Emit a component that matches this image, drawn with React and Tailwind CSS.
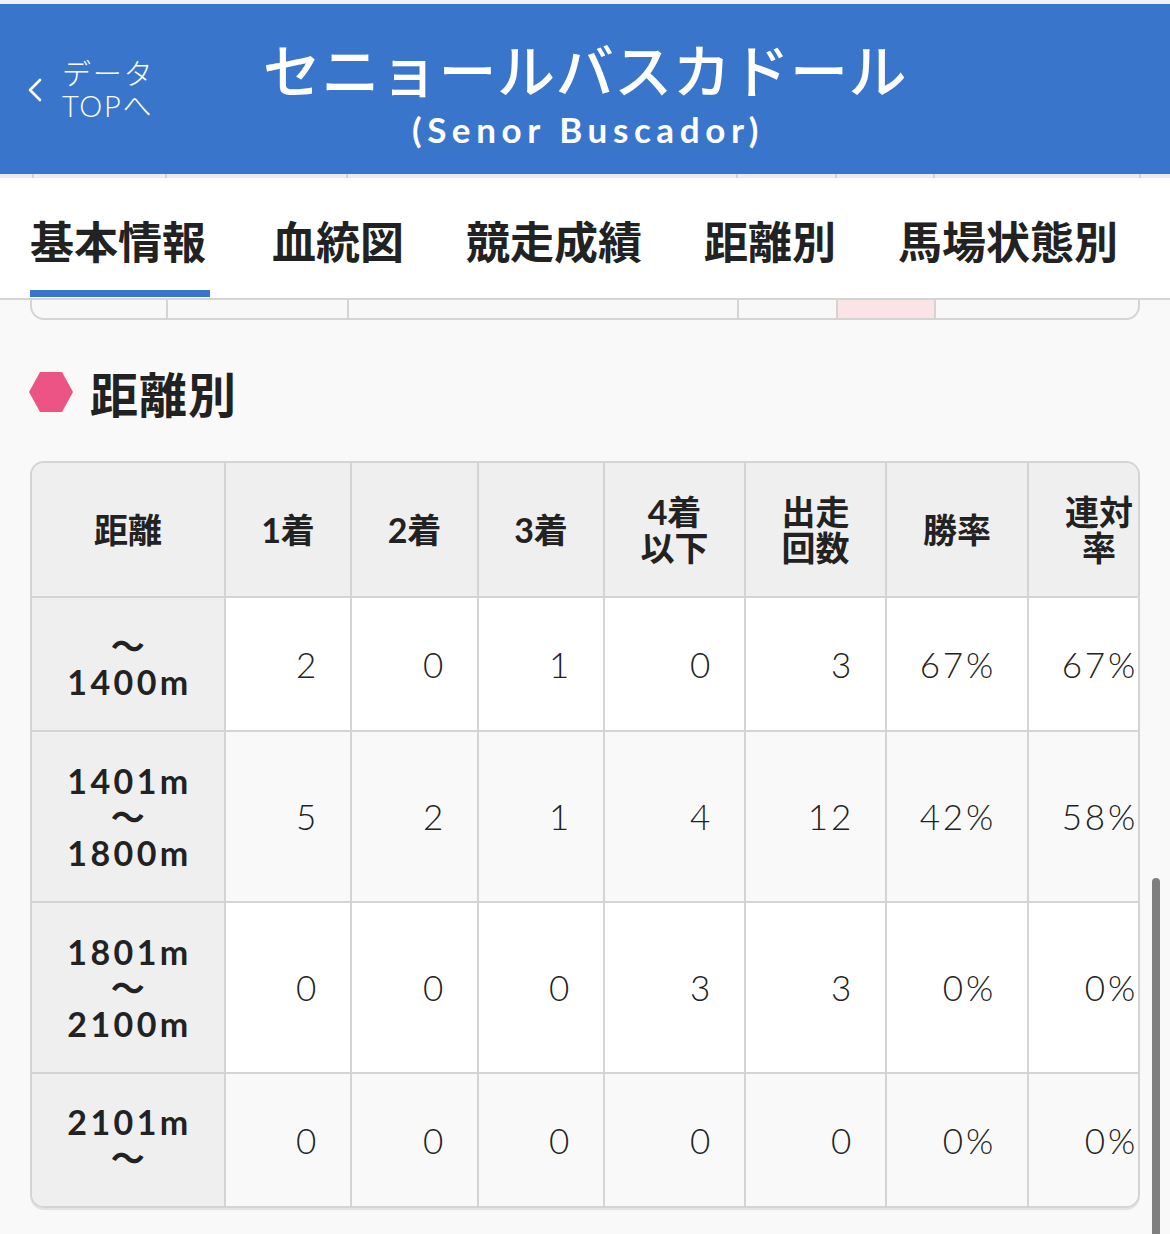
import React from 'react';

const jp = { fontFamily: '"Noto Sans CJK JP", "Noto Sans", sans-serif' };
const num = { fontFamily: 'Lato, "Noto Sans CJK JP", sans-serif' };

const tabs = ['基本情報', '血統図', '競走成績', '距離別', '馬場状態別'];

const heads = [['距離'], ['1着'], ['2着'], ['3着'], ['4着', '以下'], ['出走', '回数'], ['勝率'], ['連対', '率']];

const rows = [
  { label: ['〜', '1400m'], values: ['2', '0', '1', '0', '3', '67%', '67%'], h: 'h-[134px]', bg: 'bg-white' },
  { label: ['1401m', '〜', '1800m'], values: ['5', '2', '1', '4', '12', '42%', '58%'], h: 'h-[171px]', bg: 'bg-[#f9f9f9]' },
  { label: ['1801m', '〜', '2100m'], values: ['0', '0', '0', '3', '3', '0%', '0%'], h: 'h-[171px]', bg: 'bg-white' },
  { label: ['2101m', '〜'], values: ['0', '0', '0', '0', '0', '0%', '0%'], h: 'h-[134px]', bg: 'bg-[#f9f9f9]' },
];

const cols = 'grid grid-cols-[192px_126px_127px_126px_141px_141px_142px_142px] w-[1137px]';

function Header() {
  return (
    <header className="grid grid-cols-[1fr_auto_1fr] h-[170px] bg-[#3a75cc] text-white">
      <a className="flex items-center gap-[18px] pl-[26px] pt-[2px] self-start mt-[52px]">
        <svg width="18" height="26" viewBox="0 0 18 26" fill="none">
          <path d="M14 3 L4 13 L14 23" stroke="white" strokeWidth="2.6" strokeLinecap="round" strokeLinejoin="round" />
        </svg>
        <span className="flex flex-col text-[29px] leading-[32px] font-light tracking-[0.06em]" style={num}>
          <span>データ</span>
          <span>TOPへ</span>
        </span>
      </a>
      <div className="flex flex-col items-center pt-[28px]">
        <h1 className="text-[58px] leading-[72px] font-medium tracking-[0.01em]" style={jp}>
          セニョールバスカドール
        </h1>
        <p className="mt-[5px] text-[35px] leading-[40px] font-bold tracking-[0.16em] pl-[6px]" style={num}>
          (Senor Buscador)
        </p>
      </div>
      <div />
    </header>
  );
}

function Tabs() {
  return (
    <nav className="flex gap-[62px] pl-[30px] h-[122px] bg-white border-b-2 border-[#d4d4d4]" style={jp}>
      {tabs.map((t, i) => (
        <div key={t} className="flex flex-col h-[120px]">
          <span className="pt-[35px] text-[44px] leading-[54px] font-bold text-[#222]">{t}</span>
          {i === 0 && <span className="mt-auto mb-[1px] h-[7px] w-[180px] bg-[#3a75cc]" />}
        </div>
      ))}
    </nav>
  );
}

function Remnant() {
  return (
    <div className="ml-[30px] w-[1110px] h-[20px] flex border-x-2 border-b-2 border-[#d4d4d4] rounded-b-[14px] overflow-hidden bg-[#f8f8f8]">
      <div className="w-[134px]" />
      <div className="w-[181px] border-l-2 border-[#d4d4d4]" />
      <div className="w-[390px] border-l-2 border-[#d4d4d4]" />
      <div className="w-[99px] border-l-2 border-[#d4d4d4]" />
      <div className="w-[98px] border-l-2 border-[#d4d4d4] bg-[#fbe3e6]" />
      <div className="flex-1 border-l-2 border-[#d4d4d4]" />
    </div>
  );
}

function Strip() {
  return (
    <div className="h-[4px] flex bg-[#e9edf3]">
      <div className="w-[32px]" />
      <div className="w-[133px] border-l-2 border-[#cfd3d9]" />
      <div className="w-[181px] border-l-2 border-[#cfd3d9]" />
      <div className="w-[390px] border-l-2 border-[#cfd3d9]" />
      <div className="w-[99px] border-l-2 border-[#cfd3d9]" />
      <div className="w-[98px] border-l-2 border-[#cfd3d9]" />
      <div className="w-[206px] border-l-2 border-[#cfd3d9]" />
      <div className="flex-1 border-l-2 border-[#cfd3d9]" />
    </div>
  );
}

function DistanceTable() {
  return (
    <div className="ml-[30px] w-[1110px] border-2 border-[#d4d4d4] rounded-[14px] overflow-hidden shadow-[0_2px_0_#e2e2e2]">
      <div className={`${cols} h-[133px] bg-[#efefef]`}>
        {heads.map((h, i) => (
          <div
            key={i}
            className={`flex flex-col items-center justify-center text-[34px] leading-[36px] font-bold text-[#222] ${i > 0 ? 'border-l-2 border-[#d4d4d4]' : ''}`}
            style={num}
          >
            {h.map((l) => (
              <span key={l}>{l}</span>
            ))}
          </div>
        ))}
      </div>
      {rows.map((r, ri) => (
        <div key={ri} className={`${cols} ${r.h} border-t-2 border-[#d4d4d4]`}>
          <div
            className="flex flex-col items-center justify-center bg-[#efefef] text-[34px] leading-[36px] font-bold tracking-[0.1em] text-[#222] pl-[3px]"
            style={num}
          >
            {r.label.map((l, li) => (
              <span key={li}>{l}</span>
            ))}
          </div>
          {r.values.map((v, vi) => (
            <div
              key={vi}
              className={`flex items-center justify-end pr-[31px] border-l-2 border-[#d4d4d4] ${r.bg} text-[35px] font-light tracking-[0.08em] text-[#222]`}
              style={num}
            >
              {v}
            </div>
          ))}
        </div>
      ))}
    </div>
  );
}

export default function App() {
  return (
    <div className="relative w-[1170px] h-[1234px] overflow-hidden bg-[#f9f9f9]">
      <div className="h-[4px] bg-[#f2f2f2]" />
      <Header />
      <Strip />
      <Tabs />
      <Remnant />
      <div className="flex items-center gap-[17px] pl-[29px] mt-[32px] h-[80px]">
        <svg width="44" height="40" viewBox="0 0 44 40">
          <polygon points="11,0 33,0 44,20 33,40 11,40 0,20" fill="#ec5486" />
        </svg>
        <h2 className="text-[48px] leading-[56px] font-bold tracking-[0.02em] text-[#222]" style={jp}>
          距離別
        </h2>
      </div>
      <div className="mt-[29px]">
        <DistanceTable />
      </div>
      <div className="absolute left-[1152px] top-[878px] w-[8px] h-[360px] rounded-t-full bg-[#7f7f7f]" />
    </div>
  );
}
